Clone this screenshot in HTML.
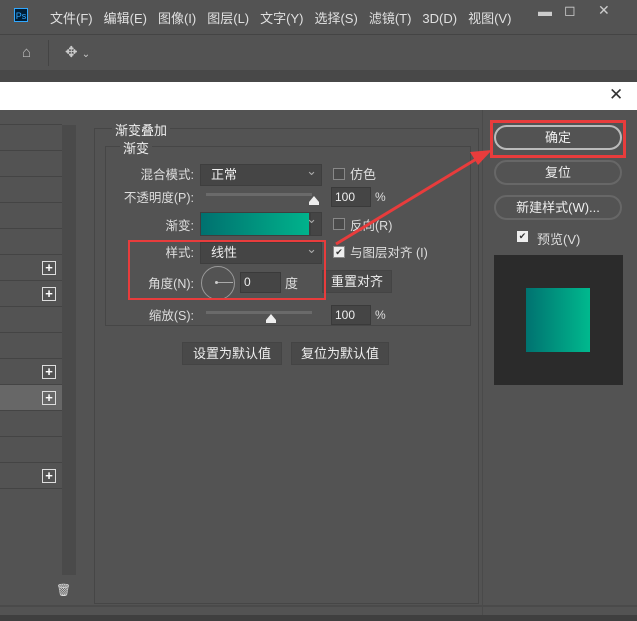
<html><head><style>
body{margin:0;width:637px;height:621px;background:#535353;font-family:"Liberation Sans","Noto Sans CJK SC",sans-serif;font-size:12px;color:#ddd;position:relative;overflow:hidden}
.a{position:absolute}
.menu span{margin-right:11px}
.row{position:absolute;left:0;width:62px;height:25px;border-bottom:1px solid #444;background:#535353}
.plus{position:absolute;left:42px;width:12px;height:12px;border:1px solid #ddd;color:#fff;font-size:13px;line-height:11px;text-align:center;font-weight:bold}
.dd{position:absolute;background:#454545;border:1px solid #3e3e3e;color:#eee;font-size:13px;box-sizing:border-box;padding-left:10px;line-height:20px}
.dd:after{content:"⌄";position:absolute;right:4px;top:-4px;color:#aaa}
.inp{position:absolute;background:#454545;border:1px solid #3a3a3a;box-sizing:border-box;color:#eee;padding-left:3px;line-height:18px}
.lbl{position:absolute;text-align:right;color:#ddd;font-size:12.5px}
.btn{position:absolute;background:#494949;border:1px solid #444;box-sizing:border-box;text-align:center;color:#eee;font-size:13px;line-height:21px}
.rbtn{position:absolute;left:494px;width:128px;height:25px;border:2px solid #676767;border-radius:13px;box-sizing:border-box;text-align:center;color:#eee;font-size:13px;line-height:21px}
.cb{position:absolute;width:10px;height:10px;border:1px solid #888;background:#4a4a4a}
</style></head><body>
<div class="a" style="left:0;top:0;width:637px;height:32px;background:#535353"></div>
<div class="a" style="left:14px;top:8px;width:14px;height:14px;background:#001d34;border:1px solid #31a8ff;color:#31a8ff;font-size:9px;line-height:14px;text-align:center;box-sizing:border-box">Ps</div>
<div class="a menu" style="left:50px;top:8px;font-size:13px;color:#e0e0e0"><span>文件(F)</span><span>编辑(E)</span><span>图像(I)</span><span>图层(L)</span><span>文字(Y)</span><span>选择(S)</span><span>滤镜(T)</span><span>3D(D)</span><span>视图(V)</span></div>
<div class="a" style="left:530px;top:0;width:107px;height:24px;color:#ccc;font-size:14px"><span class="a" style="left:8px;top:3px">▬</span><span class="a" style="left:34px;top:2px">◻</span><span class="a" style="left:68px;top:2px">✕</span></div>
<div class="a" style="left:0;top:34px;width:637px;height:36px;background:#535353;border-top:1px solid #444;border-bottom:1px solid #444"></div>
<div class="a" style="left:22px;top:44px;color:#bbb;font-size:15px">⌂</div>
<div class="a" style="left:48px;top:40px;width:1px;height:26px;background:#444"></div>
<div class="a" style="left:65px;top:43px;color:#ccc;font-size:15px">✥ <span style="font-size:10px">⌄</span></div>
<div class="a" style="left:0;top:70px;width:637px;height:12px;background:#484848"></div>
<div class="a" style="left:0;top:82px;width:637px;height:28px;background:#fff"></div>
<div class="a" style="left:609px;top:85px;color:#333;font-size:17px">✕</div>
<div class="a" style="left:0;top:110px;width:637px;height:511px;background:#535353"></div>
<div class="a" style="left:0;top:124px;width:62px;height:1px;background:#444"></div>
<div class="row" style="top:125px"></div><div class="row" style="top:151px"></div><div class="row" style="top:177px"></div><div class="row" style="top:203px"></div><div class="row" style="top:229px"></div><div class="row" style="top:255px"></div><div class="row" style="top:281px"></div><div class="row" style="top:307px"></div><div class="row" style="top:333px"></div><div class="row" style="top:359px"></div><div class="row" style="top:385px;background:#676767"></div><div class="row" style="top:411px"></div><div class="row" style="top:437px"></div><div class="row" style="top:463px"></div>
<div class="plus" style="top:261px">+</div><div class="plus" style="top:287px">+</div><div class="plus" style="top:365px">+</div><div class="plus" style="top:391px">+</div><div class="plus" style="top:469px">+</div>
<div class="a" style="left:62px;top:125px;width:14px;height:450px;background:#4a4a4a"></div>
<div class="a" style="left:56px;top:583px;color:#ddd;font-size:12px">🗑</div>
<div class="a" style="left:0;top:605px;width:637px;height:2px;background:#4a4a4a"></div>
<div class="a" style="left:0;top:615px;width:637px;height:6px;background:#3f3f3f"></div>
<div class="a" style="left:94px;top:128px;width:385px;height:476px;border:1px solid #464646;box-sizing:border-box"></div>
<div class="a" style="left:105px;top:146px;width:366px;height:180px;border:1px solid #464646;box-sizing:border-box"></div>
<div class="a" style="left:112px;top:120px;background:#535353;padding:0 3px;font-size:13px;color:#eee">渐变叠加</div>
<div class="a" style="left:120px;top:138px;background:#535353;padding:0 3px;font-size:13px;color:#eee">渐变</div>
<div class="lbl" style="right:443px;top:164px">混合模式:</div>
<div class="dd" style="left:200px;top:164px;width:122px;height:22px">正常</div>
<div class="cb" style="left:333px;top:168px"></div><div class="a" style="left:350px;top:164px;font-size:13px">仿色</div>
<div class="lbl" style="right:443px;top:187px">不透明度(P):</div>
<div class="a" style="left:206px;top:193px;width:106px;height:3px;background:#6a6a6a"></div>
<div class="a" style="left:309px;top:196px;width:0;height:0;border:5px solid transparent;border-bottom:6px solid #eee;border-top:0"></div>
<div class="a" style="left:309px;top:202px;width:10px;height:3px;background:#eee"></div>
<div class="inp" style="left:331px;top:187px;width:40px;height:20px">100</div><div class="a" style="left:375px;top:190px">%</div>
<div class="lbl" style="right:443px;top:215px">渐变:</div>
<div class="a" style="left:200px;top:212px;width:110px;height:24px;background:linear-gradient(90deg,#00716f,#00b38c);border:1px solid #3e3e3e;box-sizing:border-box"></div>
<div class="dd" style="left:310px;top:212px;width:12px;height:24px;padding:0"></div>
<div class="cb" style="left:333px;top:218px"></div><div class="a" style="left:350px;top:215px;font-size:12.5px">反向(R)</div>
<div class="lbl" style="right:443px;top:242px">样式:</div>
<div class="dd" style="left:200px;top:242px;width:122px;height:22px">线性</div>
<div class="cb" style="left:333px;top:246px;background:#eee;color:#333;font-size:9px;line-height:10px;text-align:center">✔</div><div class="a" style="left:350px;top:242px;font-size:12.5px">与图层对齐 (I)</div>
<div class="lbl" style="right:443px;top:273px">角度(N):</div>
<div class="a" style="left:201px;top:266px;width:34px;height:34px;border:1px solid #999;border-radius:50%;box-sizing:border-box"></div>
<div class="a" style="left:217px;top:282px;width:16px;height:1px;background:#aaa"></div><div class="a" style="left:215px;top:281px;width:3px;height:3px;background:#ccc;border-radius:50%"></div>
<div class="inp" style="left:240px;top:272px;width:41px;height:21px;line-height:19px">0</div><div class="a" style="left:285px;top:273px;font-size:13px">度</div>
<div class="btn" style="left:322px;top:270px;width:70px;height:23px">重置对齐</div>
<div class="a" style="left:128px;top:240px;width:198px;height:60px;border:2px solid #e83c3c;box-sizing:border-box"></div>
<div class="lbl" style="right:443px;top:305px">缩放(S):</div>
<div class="a" style="left:206px;top:311px;width:106px;height:3px;background:#6a6a6a"></div>
<div class="a" style="left:266px;top:314px;width:0;height:0;border:5px solid transparent;border-bottom:6px solid #eee;border-top:0"></div>
<div class="a" style="left:266px;top:320px;width:10px;height:3px;background:#eee"></div>
<div class="inp" style="left:331px;top:305px;width:40px;height:20px">100</div><div class="a" style="left:375px;top:308px">%</div>
<div class="btn" style="left:182px;top:342px;width:100px;height:23px">设置为默认值</div>
<div class="btn" style="left:291px;top:342px;width:98px;height:23px">复位为默认值</div>
<div class="a" style="left:482px;top:110px;width:1px;height:505px;background:#4a4a4a"></div>
<div class="rbtn" style="top:125px;border-color:#bbb">确定</div>
<div class="a" style="left:490px;top:120px;width:136px;height:38px;border:3px solid #e83c3c;box-sizing:border-box"></div>
<div class="rbtn" style="top:160px">复位</div>
<div class="rbtn" style="top:195px">新建样式(W)...</div>
<div class="a" style="left:517px;top:231px;width:11px;height:11px;background:#eee;color:#333;font-size:9px;line-height:11px;text-align:center">✔</div>
<div class="a" style="left:537px;top:229px;font-size:13px">预览(V)</div>
<div class="a" style="left:494px;top:255px;width:129px;height:130px;background:#2b2b2b"></div>
<div class="a" style="left:526px;top:288px;width:64px;height:64px;background:linear-gradient(90deg,#007270,#00b98e)"></div>
<svg class="a" style="left:0;top:0" width="637" height="621"><line x1="336" y1="244" x2="478" y2="158" stroke="#e83c3c" stroke-width="3"/><polygon points="492,150 470,152 478,165" fill="#e83c3c"/></svg>
</body></html>
